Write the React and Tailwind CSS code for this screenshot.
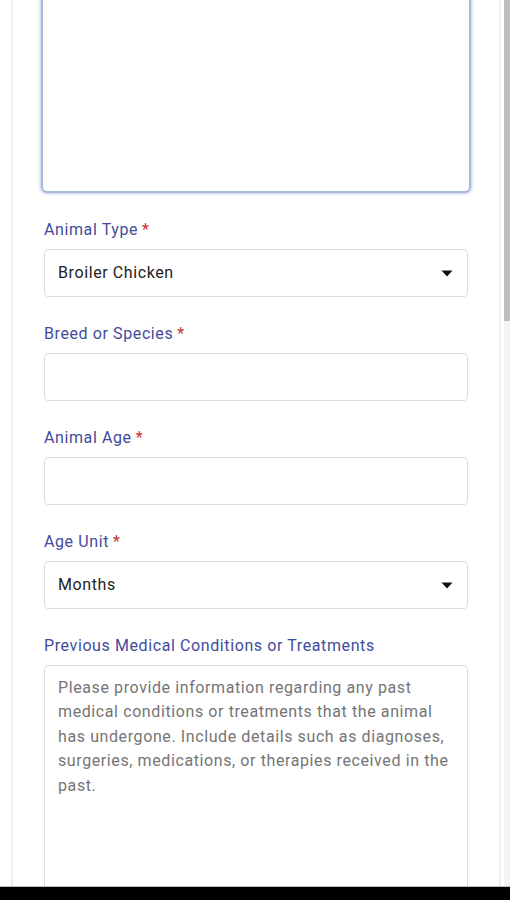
import React from 'react';

const font = { fontFamily: 'Roboto, "Noto Sans", sans-serif' };

const Label = ({ text, required }) => (
  <div className="h-5 leading-5 text-[16px] tracking-[0.6px] text-[#3f4c9c] mb-[9px]">
    {text}
    {required && <span className="text-[#d32f2f] ml-1">*</span>}
  </div>
);

const Caret = () => (
  <svg width="12" height="7" viewBox="0 0 12 7" className="text-[#111]">
    <path d="M0.5 0.5 L11.5 0.5 L6 6.5 Z" fill="currentColor" />
  </svg>
);

const SelectBox = ({ value }) => (
  <div className="h-12 rounded border border-[#dcdcdc] bg-white flex items-center justify-between pl-[13px] pr-[14px] text-[16px] tracking-[0.6px] text-[#222]">
    <span>{value}</span>
    <Caret />
  </div>
);

const InputBox = () => <div className="h-12 rounded border border-[#dcdcdc] bg-white" />;

const Field = ({ label, required, children }) => (
  <div className="mb-[27px]">
    <Label text={label} required={required} />
    {children}
  </div>
);

export default function App() {
  return (
    <div className="w-[510px] h-[900px] flex flex-col bg-white overflow-hidden" style={font}>
      <div className="flex-1 flex overflow-hidden">
        <div className="w-[11px] bg-white" />
        <div className="w-[490px] border-l-2 border-r-2 border-[#efefef] bg-white pl-[31px] pr-[31px]">
          {/* focused textarea, top cut off */}
          <div className="-mt-6 h-[217px] -mx-[3px] rounded-md border-2 border-[#a9bad8] shadow-[0_0_3px_1px_rgba(150,175,215,0.6)] bg-white mb-[27px]" />

          <Field label="Animal Type" required>
            <SelectBox value="Broiler Chicken" />
          </Field>

          <Field label="Breed or Species" required>
            <InputBox />
          </Field>

          <Field label="Animal Age" required>
            <InputBox />
          </Field>

          <Field label="Age Unit" required>
            <SelectBox value="Months" />
          </Field>

          <div>
            <Label text="Previous Medical Conditions or Treatments" />
            <div className="h-[260px] rounded border border-[#dcdcdc] bg-white pl-[13px] pr-[12px] pt-[10px] text-[16px] tracking-[0.6px] leading-[24.4px] text-[#757575]">
              Please provide information regarding any past medical conditions or treatments that the animal has undergone. Include details such as diagnoses, surgeries, medications, or therapies received in the past.
            </div>
          </div>
        </div>
        <div className="w-[3px] bg-white" />
        <div className="w-[6px] bg-[#f3f3f3] flex flex-col">
          <div className="h-[321px] bg-[#bdbdbd]" />
        </div>
      </div>
      <div className="h-[14px] bg-black border-t border-[#bbb]" />
    </div>
  );
}
